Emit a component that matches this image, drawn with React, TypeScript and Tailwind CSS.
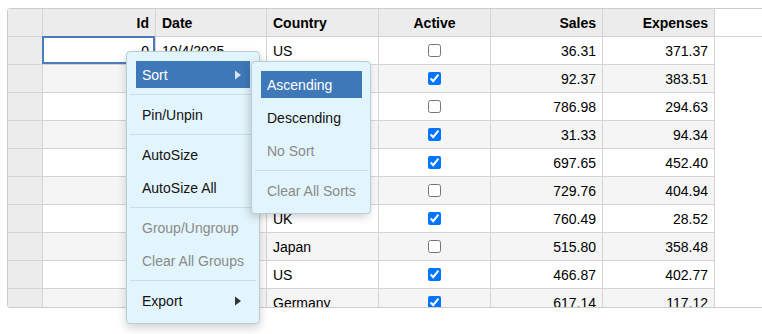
import React from "react";

type Row = {
  id: number;
  date: string;
  country: string;
  active: boolean;
  sales: string;
  expenses: string;
};

const rows: Row[] = [
  { id: 0, date: "10/4/2025", country: "US", active: false, sales: "36.31", expenses: "371.37" },
  { id: 1, date: "10/5/2025", country: "Germany", active: true, sales: "92.37", expenses: "383.51" },
  { id: 2, date: "10/6/2025", country: "UK", active: false, sales: "786.98", expenses: "294.63" },
  { id: 3, date: "10/7/2025", country: "Japan", active: true, sales: "31.33", expenses: "94.34" },
  { id: 4, date: "10/8/2025", country: "Italy", active: true, sales: "697.65", expenses: "452.40" },
  { id: 5, date: "10/9/2025", country: "Greece", active: false, sales: "729.76", expenses: "404.94" },
  { id: 6, date: "10/10/2025", country: "UK", active: true, sales: "760.49", expenses: "28.52" },
  { id: 7, date: "10/11/2025", country: "Japan", active: false, sales: "515.80", expenses: "358.48" },
  { id: 8, date: "10/12/2025", country: "US", active: true, sales: "466.87", expenses: "402.77" },
  { id: 9, date: "10/13/2025", country: "Germany", active: true, sales: "617.14", expenses: "117.12" },
];

const cell =
  "h-[28px] shrink-0 border-r border-b border-[#d4d4d4] px-[6px] pt-[2px] flex items-center whitespace-nowrap";

function Arrow({ color }: { color: string }) {
  return (
    <svg width="6" height="10" viewBox="0 0 6 10" className="shrink-0">
      <path d="M0 0.5 L6 5 L0 9.5 Z" fill={color} />
    </svg>
  );
}

function MenuItem({
  label,
  active,
  disabled,
  sub,
}: {
  label: string;
  active?: boolean;
  disabled?: boolean;
  sub?: boolean;
}) {
  return (
    <div
      className={`flex h-[27px] items-center justify-between whitespace-nowrap pl-[6px] pr-[9px] pt-px ${
        active ? "bg-[#3f78b8] text-white" : disabled ? "text-[#8a8a8a]" : "text-[#111]"
      }`}
    >
      <span>{label}</span>
      {sub && <Arrow color={active ? "#d6e2ef" : "#333"} />}
    </div>
  );
}

function Sep() {
  return <div className="-mx-[6px] h-px bg-[#c9dde5]" />;
}

export default function App() {
  return (
    <div
      className="relative h-[334px] w-[762px] overflow-hidden bg-white text-[14px] text-black"
      style={{ fontFamily: '"Liberation Sans", Arial, sans-serif' }}
    >
      <div className="ml-[7px] mt-[8px] h-[300px] w-[800px] overflow-hidden rounded-[3px] border border-[#cccccc]">
        {/* header */}
        <div className="flex bg-[#ececec] font-bold">
          <div className={`${cell} w-[35px]`} />
          <div className={`${cell} w-[113px] justify-end`}>Id</div>
          <div className={`${cell} w-[111px]`}>Date</div>
          <div className={`${cell} w-[112px]`}>Country</div>
          <div className={`${cell} w-[112px] justify-center`}>Active</div>
          <div className={`${cell} w-[112px] justify-end`}>Sales</div>
          <div className={`${cell} w-[112px] justify-end`}>Expenses</div>
          <div className="h-[28px] flex-1 border-b border-[#d4d4d4] bg-white" />
        </div>
        {rows.map((r, i) => (
          <div key={r.id} className={`flex ${i % 2 ? "bg-[#f5f5f5]" : "bg-white"}`}>
            <div className={`${cell} w-[35px] bg-[#ececec]`} />
            <div
              className={`${cell} w-[113px] justify-end ${
                i === 0 ? "relative" : ""
              }`}
            >
              {i === 0 && (
                <div className="absolute -left-px -top-px bottom-0 right-0 border-2 border-[#4a7dbd]" />
              )}
              {r.id}
            </div>
            <div className={`${cell} w-[111px]`}>{r.date}</div>
            <div className={`${cell} w-[112px]`}>{r.country}</div>
            <div className={`${cell} w-[112px] justify-center !pt-0`}>
              <input type="checkbox" checked={r.active} readOnly className="m-0 h-[13px] w-[13px]" />
            </div>
            <div className={`${cell} w-[112px] justify-end`}>{r.sales}</div>
            <div className={`${cell} w-[112px] justify-end`}>{r.expenses}</div>
            <div className="h-[28px] flex-1 bg-white" />
          </div>
        ))}
      </div>

      {/* context menu */}
      <div className="absolute left-[126px] top-[51px] w-[134px] rounded-[4px] border border-[#b9cdd6] bg-[#e3f5fc] p-[9px] shadow-[0_4px_10px_rgba(0,0,0,0.18)]">
        <div className="flex flex-col gap-[6px]">
          <MenuItem label="Sort" active sub />
          <Sep />
          <MenuItem label="Pin/Unpin" />
          <Sep />
          <MenuItem label="AutoSize" />
          <MenuItem label="AutoSize All" />
          <Sep />
          <MenuItem label="Group/Ungroup" disabled />
          <MenuItem label="Clear All Groups" disabled />
          <Sep />
          <MenuItem label="Export" sub />
        </div>
      </div>

      {/* submenu */}
      <div className="absolute left-[251px] top-[61px] w-[120px] rounded-[4px] border border-[#b9cdd6] bg-[#e3f5fc] p-[9px] pr-[8px] shadow-[-2px_3px_8px_rgba(0,0,0,0.18)]">
        <div className="flex flex-col gap-[6px]">
          <MenuItem label="Ascending" active />
          <MenuItem label="Descending" />
          <MenuItem label="No Sort" disabled />
          <Sep />
          <MenuItem label="Clear All Sorts" disabled />
        </div>
      </div>
    </div>
  );
}
